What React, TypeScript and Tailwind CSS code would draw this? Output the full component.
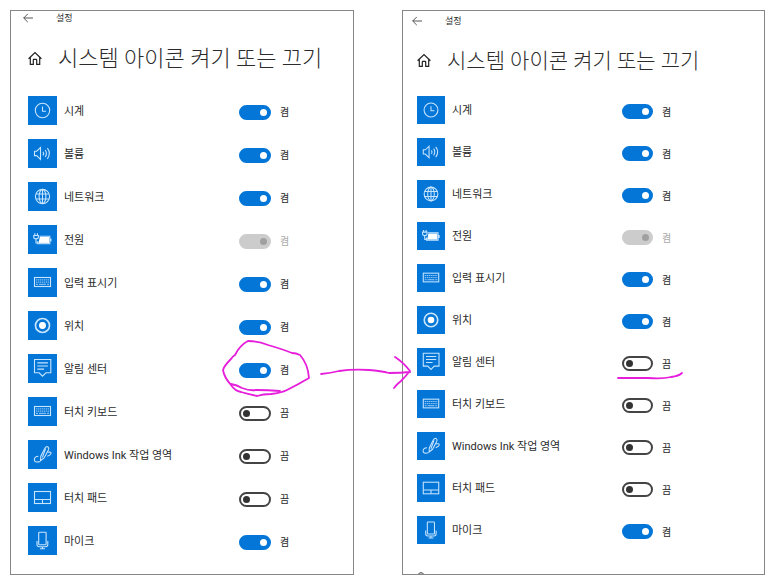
import React from 'react'
import clsx from 'clsx'

type IconName =
  | 'clock'
  | 'volume'
  | 'network'
  | 'power'
  | 'keyboard'
  | 'location'
  | 'chat'
  | 'ink'
  | 'touchpad'
  | 'mic'

interface SystemIcon {
  id: string
  label: string
  icon: IconName
  on: boolean
  disabled?: boolean
}

const systemIcons: SystemIcon[] = [
  { id: 'clock', label: '시계', icon: 'clock', on: true },
  { id: 'volume', label: '볼륨', icon: 'volume', on: true },
  { id: 'network', label: '네트워크', icon: 'network', on: true },
  { id: 'power', label: '전원', icon: 'power', on: true, disabled: true },
  { id: 'input', label: '입력 표시기', icon: 'keyboard', on: true },
  { id: 'location', label: '위치', icon: 'location', on: true },
  { id: 'action-center', label: '알림 센터', icon: 'chat', on: true },
  { id: 'touch-keyboard', label: '터치 키보드', icon: 'keyboard', on: false },
  { id: 'ink', label: 'Windows Ink 작업 영역', icon: 'ink', on: false },
  { id: 'touchpad', label: '터치 패드', icon: 'touchpad', on: false },
  { id: 'mic', label: '마이크', icon: 'mic', on: true }
]

const glyphs: Record<IconName, React.ReactNode> = {
  clock: (
    <>
      <circle cx="14.5" cy="14.5" r="7.2" />
      <path d="M14.5 10.5v4.7h3.5" />
    </>
  ),
  volume: (
    <>
      <path d="M6.5 12.2h2.2l3.8-3.7v12l-3.8-3.9H6.5z" />
      <path d="M15 12.8q1.2 1.8 0 3.6M17.2 11q2.4 3.4 0 7M19.4 9.2q4 5.3 0 10.6" />
    </>
  ),
  network: (
    <>
      <circle cx="14.5" cy="14.5" r="7.1" />
      <ellipse cx="14.5" cy="14.5" rx="3.4" ry="7.1" />
      <path d="M14.5 7.4v14.2M8 12h13M8 17h13" />
    </>
  ),
  power: (
    <>
      <path d="M6.8 8.3v2.2M9.4 8.3v2.2M5.8 10.5h4.6v1.8q0 1.6-2.3 1.6t-2.3-1.6zM8 14v4h2" />
      <path d="M11.5 11.2h10.3v7.6H9.8V16M22.9 13.4v3.2" />
      <path d="M12.3 12.5h8.2v5.2h-9.3z" fill="#fff" stroke="#fff" />
    </>
  ),
  keyboard: (
    <>
      <rect x="6.5" y="9.5" width="16" height="9" />
      <path d="M8 11.9h13M8 14.1h13" strokeWidth="0.8" strokeDasharray="1.4 .6" />
      <path d="M8 16.3h2M11 16.3h7M19 16.3h2" strokeWidth="0.8" />
    </>
  ),
  location: (
    <>
      <circle cx="14.5" cy="14.5" r="7" strokeWidth="1.7" />
      <circle cx="14.5" cy="14.5" r="2.9" fill="#fff" stroke="#fff" />
    </>
  ),
  chat: (
    <>
      <path d="M6.5 5.5h16.3v13.3h-4.9l-3.4 3.4-3.4-3.4H6.5z" />
      <path d="M9.3 8.9h10.6M9.3 12h10.6M9.3 15.1h6.8" />
    </>
  ),
  ink: (
    <>
      <path d="M12.5 20.7l.3-4.5 4.2-8.2q1.4-2 3-1.1 1.4 1 .4 3l-4.3 8z" />
      <path d="M17.6 8.6l-3.2 8.8M10.4 16.3q-4 .3-4.1 3.3.2 3.5 5.5 2M19.8 12.3q3.7-.7 3.2 1.3-.4 1.4-3.7 2.6" />
    </>
  ),
  touchpad: (
    <>
      <rect x="6.5" y="8.5" width="16" height="12" />
      <path d="M6.5 16.5h16M14.5 16.5v4" />
    </>
  ),
  mic: (
    <>
      <rect x="10.7" y="6.3" width="7.4" height="12.4" rx=".6" />
      <path d="M9 15v3.5q0 2.2 2.2 2.2h6.4q2.2 0 2.2-2.2V15M14.4 20.7v2M12 22.8h5" />
    </>
  )
}

function IconTile({ name, className }: { name: IconName; className: string }) {
  return (
    <svg
      viewBox="0 0 29 29"
      fill="none"
      stroke="#c8e5ff"
      strokeWidth="1.1"
      aria-hidden="true"
      className={clsx('shrink-0 bg-[#0376d8]', className)}
    >
      {glyphs[name]}
    </svg>
  )
}

function BackIcon() {
  return (
    <svg viewBox="0 0 10 10" fill="none" stroke="#444" strokeWidth="0.9" className="size-[10px]">
      <path d="M10 5H.7M4.8.9L.7 5l4.1 4.1" />
    </svg>
  )
}

function HomeIcon() {
  return (
    <svg viewBox="0 0 14 14" fill="none" stroke="#222" strokeWidth="1.2" className="size-[14px]">
      <path d="M.6 7.7L7 1.5l6.4 6.2M2.3 6.3v7h3V9q0-.6.6-.6h2.2q.6 0 .6.6v4.3h3v-7" />
    </svg>
  )
}

// Hand-drawn marks, each placed against the control it points out
const markClass = 'pointer-events-none absolute z-10 overflow-visible'

function CircleMark() {
  return (
    <svg
      viewBox="0 0 90 58"
      fill="none"
      stroke="#e61edb"
      strokeWidth="1.8"
      strokeLinecap="round"
      strokeLinejoin="round"
      aria-hidden="true"
      className={clsx(markClass, '-left-[18px] -top-[24px] w-[90px] h-[58px]')}
    >
      <path d="M27 2q-8 4-13 14-3 2-4 4-7 7-8 11 1 7 8 15 4 6 10 7 7 2 16 4 6-2 14-2 10-1 16-4 12-6 22-12-1-14-9-23-4-2-8-2-10-4-24-8-10-4-20-4" />
      <path d="M10 45q6 1 11 4 8 3 14 2 12 0 24 1" />
    </svg>
  )
}

function UnderlineMark() {
  return (
    <svg
      viewBox="0 0 66 8"
      fill="none"
      stroke="#e61edb"
      strokeWidth="1.8"
      strokeLinecap="round"
      aria-hidden="true"
      className={clsx(markClass, '-left-[5px] top-[16px] w-[66px] h-[8px]')}
    >
      <path d="M1 6h30q15 1 23-1 8-1 11-4" />
    </svg>
  )
}

function ArrowMark() {
  return (
    <svg
      viewBox="0 0 92 34"
      fill="none"
      stroke="#e61edb"
      strokeWidth="1.8"
      strokeLinecap="round"
      strokeLinejoin="round"
      aria-hidden="true"
      className={clsx(markClass, '-left-[97px] top-[8px] w-[92px] h-[34px]')}
    >
      <path d="M1 18q10-1 18-3 14-2 30-1 12 1 20 3 12 0 21-1M75 1q8 5 15 14-5 6-9 10-4 3-7 7" />
    </svg>
  )
}

interface ToggleProps {
  id: string
  on: boolean
  disabled?: boolean
  large?: boolean
}

function Toggle({ id, on, disabled, large }: ToggleProps) {
  return (
    <input
      id={id}
      type="checkbox"
      role="switch"
      defaultChecked={on}
      disabled={disabled}
      className={clsx(
        'flex h-[15px] appearance-none items-center rounded-full border-2 border-[#444] bg-white px-[2px]',
        "before:size-[7px] before:rounded-full before:bg-[#333] before:content-['']",
        'checked:justify-end checked:border-[#0376d8] checked:bg-[#0376d8] checked:before:bg-white',
        'disabled:border-[#ccc] disabled:bg-[#ccc] disabled:before:bg-[#a0a0a0]',
        large ? 'w-[32px]' : 'w-[31px]'
      )}
    />
  )
}

interface SettingsPanelProps {
  name: string
  items: SystemIcon[]
  large?: boolean
  marked: string
  children?: React.ReactNode
}

function SettingsPanel({ name, items, large, marked, children }: SettingsPanelProps) {
  return (
    <section className="min-w-0 border border-[#868686] bg-white">
      <div className={clsx('flex items-center gap-[23px]', large ? 'h-[14px] pl-3' : 'h-5 pl-[9px]')}>
        <button type="button" aria-label="뒤로">
          <BackIcon />
        </button>
        <span className="text-[9px] leading-none">설정</span>
      </div>

      <div className={clsx('flex items-center gap-4', large ? 'mt-[17px] pl-[17px]' : 'mt-[13px] pl-[14px]')}>
        <a href="#home" aria-label="홈">
          <HomeIcon />
        </a>
        <h1 className={clsx('whitespace-nowrap pt-[2px] font-light leading-[30px]', large ? 'text-[22px]' : 'text-[21px]')}>
          시스템 아이콘 켜기 또는 끄기
        </h1>
      </div>

      <ul
        className={clsx(
          'flex flex-col gap-[14px]',
          large ? 'mt-[22px] pb-[19px] pl-[17px]' : 'mt-5 pl-[14px]'
        )}
      >
        {items.map((item) => {
          const id = `${name}-${item.id}`
          return (
            <li
              key={id}
              className={clsx(
                'relative grid items-center',
                large ? 'grid-cols-[29px_182px_auto]' : 'grid-cols-[28px_177px_auto]'
              )}
            >
              <IconTile name={item.icon} className={large ? 'size-[29px]' : 'size-7'} />
              <label htmlFor={id} className="whitespace-nowrap pt-[2px] pl-[7px] text-[11px] leading-4">
                {item.label}
              </label>
              <div className="relative mt-[3px] flex items-center gap-[9px]">
                <Toggle id={id} on={item.on} disabled={item.disabled} large={large} />
                <span className={clsx('pt-[2px] text-[10px] leading-none', item.disabled && 'text-[#aaa]')}>
                  {item.on ? '켬' : '끔'}
                </span>
                {item.id === marked && (large ? <CircleMark /> : <UnderlineMark />)}
              </div>
              {item.id === marked && !large && <ArrowMark />}
            </li>
          )
        })}
      </ul>
      {children}
    </section>
  )
}

export default function App() {
  const changedIcons = systemIcons.map((item) =>
    item.id === 'action-center' ? { ...item, on: false } : item
  )

  return (
    <main className="grid grid-cols-[344fr_363fr] gap-12 bg-white pt-[10px] pr-2 pb-[5px] pl-[10px] font-[Roboto,'Noto_Sans_CJK_KR',sans-serif] text-[#2b2b2b]">
      <SettingsPanel name="before" items={systemIcons} marked="action-center" large />
      <SettingsPanel name="after" items={changedIcons} marked="action-center">
        {/* Top edge of the help link that is cut off below the list */}
        <svg
          viewBox="0 0 8 2"
          fill="none"
          stroke="#333"
          aria-hidden="true"
          className="mt-7 ml-[14px] h-[2px] w-[8px]"
        >
          <path d="M1 2.5q3-3.5 6 0" />
        </svg>
      </SettingsPanel>
    </main>
  )
}
